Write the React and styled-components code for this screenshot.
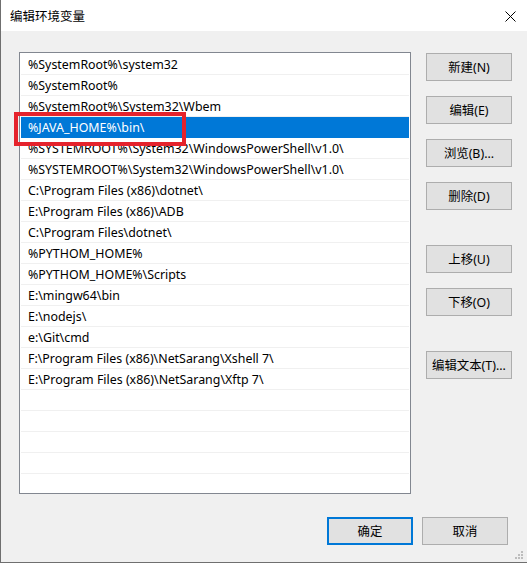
import React from "react";
import styled, { createGlobalStyle } from "styled-components";

const GlobalStyle = createGlobalStyle`
    html, body {
        margin: 0;
        padding: 0;
        background: #f0f0f0;
    }
    body {
        font-family: "Noto Sans", "Noto Sans CJK SC", sans-serif;
    }
`;

const paths = [
    '%SystemRoot%\\system32',
    '%SystemRoot%',
    '%SystemRoot%\\System32\\Wbem',
    '%JAVA_HOME%\\bin\\',
    '%SYSTEMROOT%\\System32\\WindowsPowerShell\\v1.0\\',
    '%SYSTEMROOT%\\System32\\WindowsPowerShell\\v1.0\\',
    'C:\\Program Files (x86)\\dotnet\\',
    'E:\\Program Files (x86)\\ADB',
    'C:\\Program Files\\dotnet\\',
    '%PYTHOM_HOME%',
    '%PYTHOM_HOME%\\Scripts',
    'E:\\mingw64\\bin',
    'E:\\nodejs\\',
    'e:\\Git\\cmd',
    'F:\\Program Files (x86)\\NetSarang\\Xshell 7\\',
    'E:\\Program Files (x86)\\NetSarang\\Xftp 7\\',
];

const TOTAL_ROWS = 21;
const SELECTED = 3;

const sideGroups = [
    ['新建(N)', '编辑(E)', '浏览(B)...', '删除(D)'],
    ['上移(U)', '下移(O)'],
    ['编辑文本(T)...'],
];

const EnvEditor = () => {
    const rows = Array.from({ length: TOTAL_ROWS }, (_, i) => paths[i] || '');

    return (
        <Window>
            <TitleBar>
                <span>编辑环境变量</span>
                <CloseIcon width="11" height="11" viewBox="0 0 11 11">
                    <path d="M0.5 0.5 L10.5 10.5 M10.5 0.5 L0.5 10.5" stroke="#000" strokeWidth="1" />
                </CloseIcon>
            </TitleBar>
            <Body>
                <MainRow>
                    <PathList>
                        {rows.map((text, index) => (
                            <PathRow key={index} $selected={index === SELECTED}>
                                {text}
                            </PathRow>
                        ))}
                    </PathList>
                    <SideColumn>
                        {sideGroups.map((group, gi) => (
                            <ButtonGroup key={gi}>
                                {group.map((label) => (
                                    <Button key={label}>{label}</Button>
                                ))}
                            </ButtonGroup>
                        ))}
                    </SideColumn>
                </MainRow>
                <Footer>
                    <Button $primary>确定</Button>
                    <Button>取消</Button>
                </Footer>
            </Body>
            {/* 선택된 행 강조 표시 */}
            <Highlight />
            <Grip width="9" height="9" viewBox="0 0 9 9">
                <rect x="6" y="0" width="2" height="2" />
                <rect x="3" y="3" width="2" height="2" />
                <rect x="6" y="3" width="2" height="2" />
                <rect x="0" y="6" width="2" height="2" />
                <rect x="3" y="6" width="2" height="2" />
                <rect x="6" y="6" width="2" height="2" />
            </Grip>
        </Window>
    );
};

const Window = styled.div`
    position: relative;
    width: 527px;
    height: 563px;
    box-sizing: border-box;
    border-left: 1px solid #6f6f6f;
    border-bottom: 1px solid #6f6f6f;
    background: #f0f0f0;
    display: flex;
    flex-direction: column;
    overflow: hidden;
    font-size: 12px;
    color: #000;
`;

const TitleBar = styled.div`
    height: 31px;
    flex: none;
    background: #ffffff;
    display: flex;
    align-items: center;
    justify-content: space-between;
    padding: 0 11px 0 9px;
    font-size: 12.5px;
    font-family: "Noto Sans CJK SC", sans-serif;
`;

const CloseIcon = styled.svg`
    display: block;
    margin-top: 1px;
`;

const Body = styled.div`
    flex: 1;
    display: flex;
    flex-direction: column;
    padding: 21px 0 0 18px;
`;

const MainRow = styled.div`
    display: flex;
    gap: 15px;
`;

const PathList = styled.div`
    width: 392px;
    height: 442px;
    box-sizing: border-box;
    border: 1px solid #828790;
    background: #ffffff;
    padding: 1px 1px 0 1px;
    overflow: hidden;
`;

const PathRow = styled.div`
    height: 21px;
    box-sizing: border-box;
    border-bottom: 1px solid ${(props) => (props.$selected ? '#0078d7' : '#f0f0f0')};
    background: ${(props) => (props.$selected ? '#0078d7' : 'transparent')};
    color: ${(props) => (props.$selected ? '#ffffff' : '#000000')};
    padding-left: 7px;
    font-size: 12.4px;
    line-height: 21px;
    white-space: nowrap;
`;

const SideColumn = styled.div`
    display: flex;
    flex-direction: column;
    gap: 35px;
    padding-top: 1px;
`;

const ButtonGroup = styled.div`
    display: flex;
    flex-direction: column;
    gap: 15px;
`;

const Button = styled.button`
    width: 86px;
    height: 28px;
    box-sizing: border-box;
    background: #e1e1e1;
    border: ${(props) => (props.$primary ? '2px solid #0078d7' : '1px solid #adadad')};
    font-family: "Noto Sans", "Noto Sans CJK SC", sans-serif;
    font-size: 12.4px;
    color: #000;
    padding: 0;
    cursor: pointer;
`;

const Footer = styled.div`
    display: flex;
    justify-content: flex-end;
    gap: 9px;
    margin-top: 23px;
    padding-right: 19px;
`;

const Highlight = styled.div`
    position: absolute;
    left: 13px;
    top: 112px;
    width: 172px;
    height: 34px;
    box-sizing: border-box;
    border: 4px solid #e5232c;
    pointer-events: none;
`;

const Grip = styled.svg`
    position: absolute;
    right: 3px;
    bottom: 2px;
    fill: #bdbdbd;
`;

export default function App() {
    return (
        <>
            <GlobalStyle />
            <EnvEditor />
        </>
    );
}
